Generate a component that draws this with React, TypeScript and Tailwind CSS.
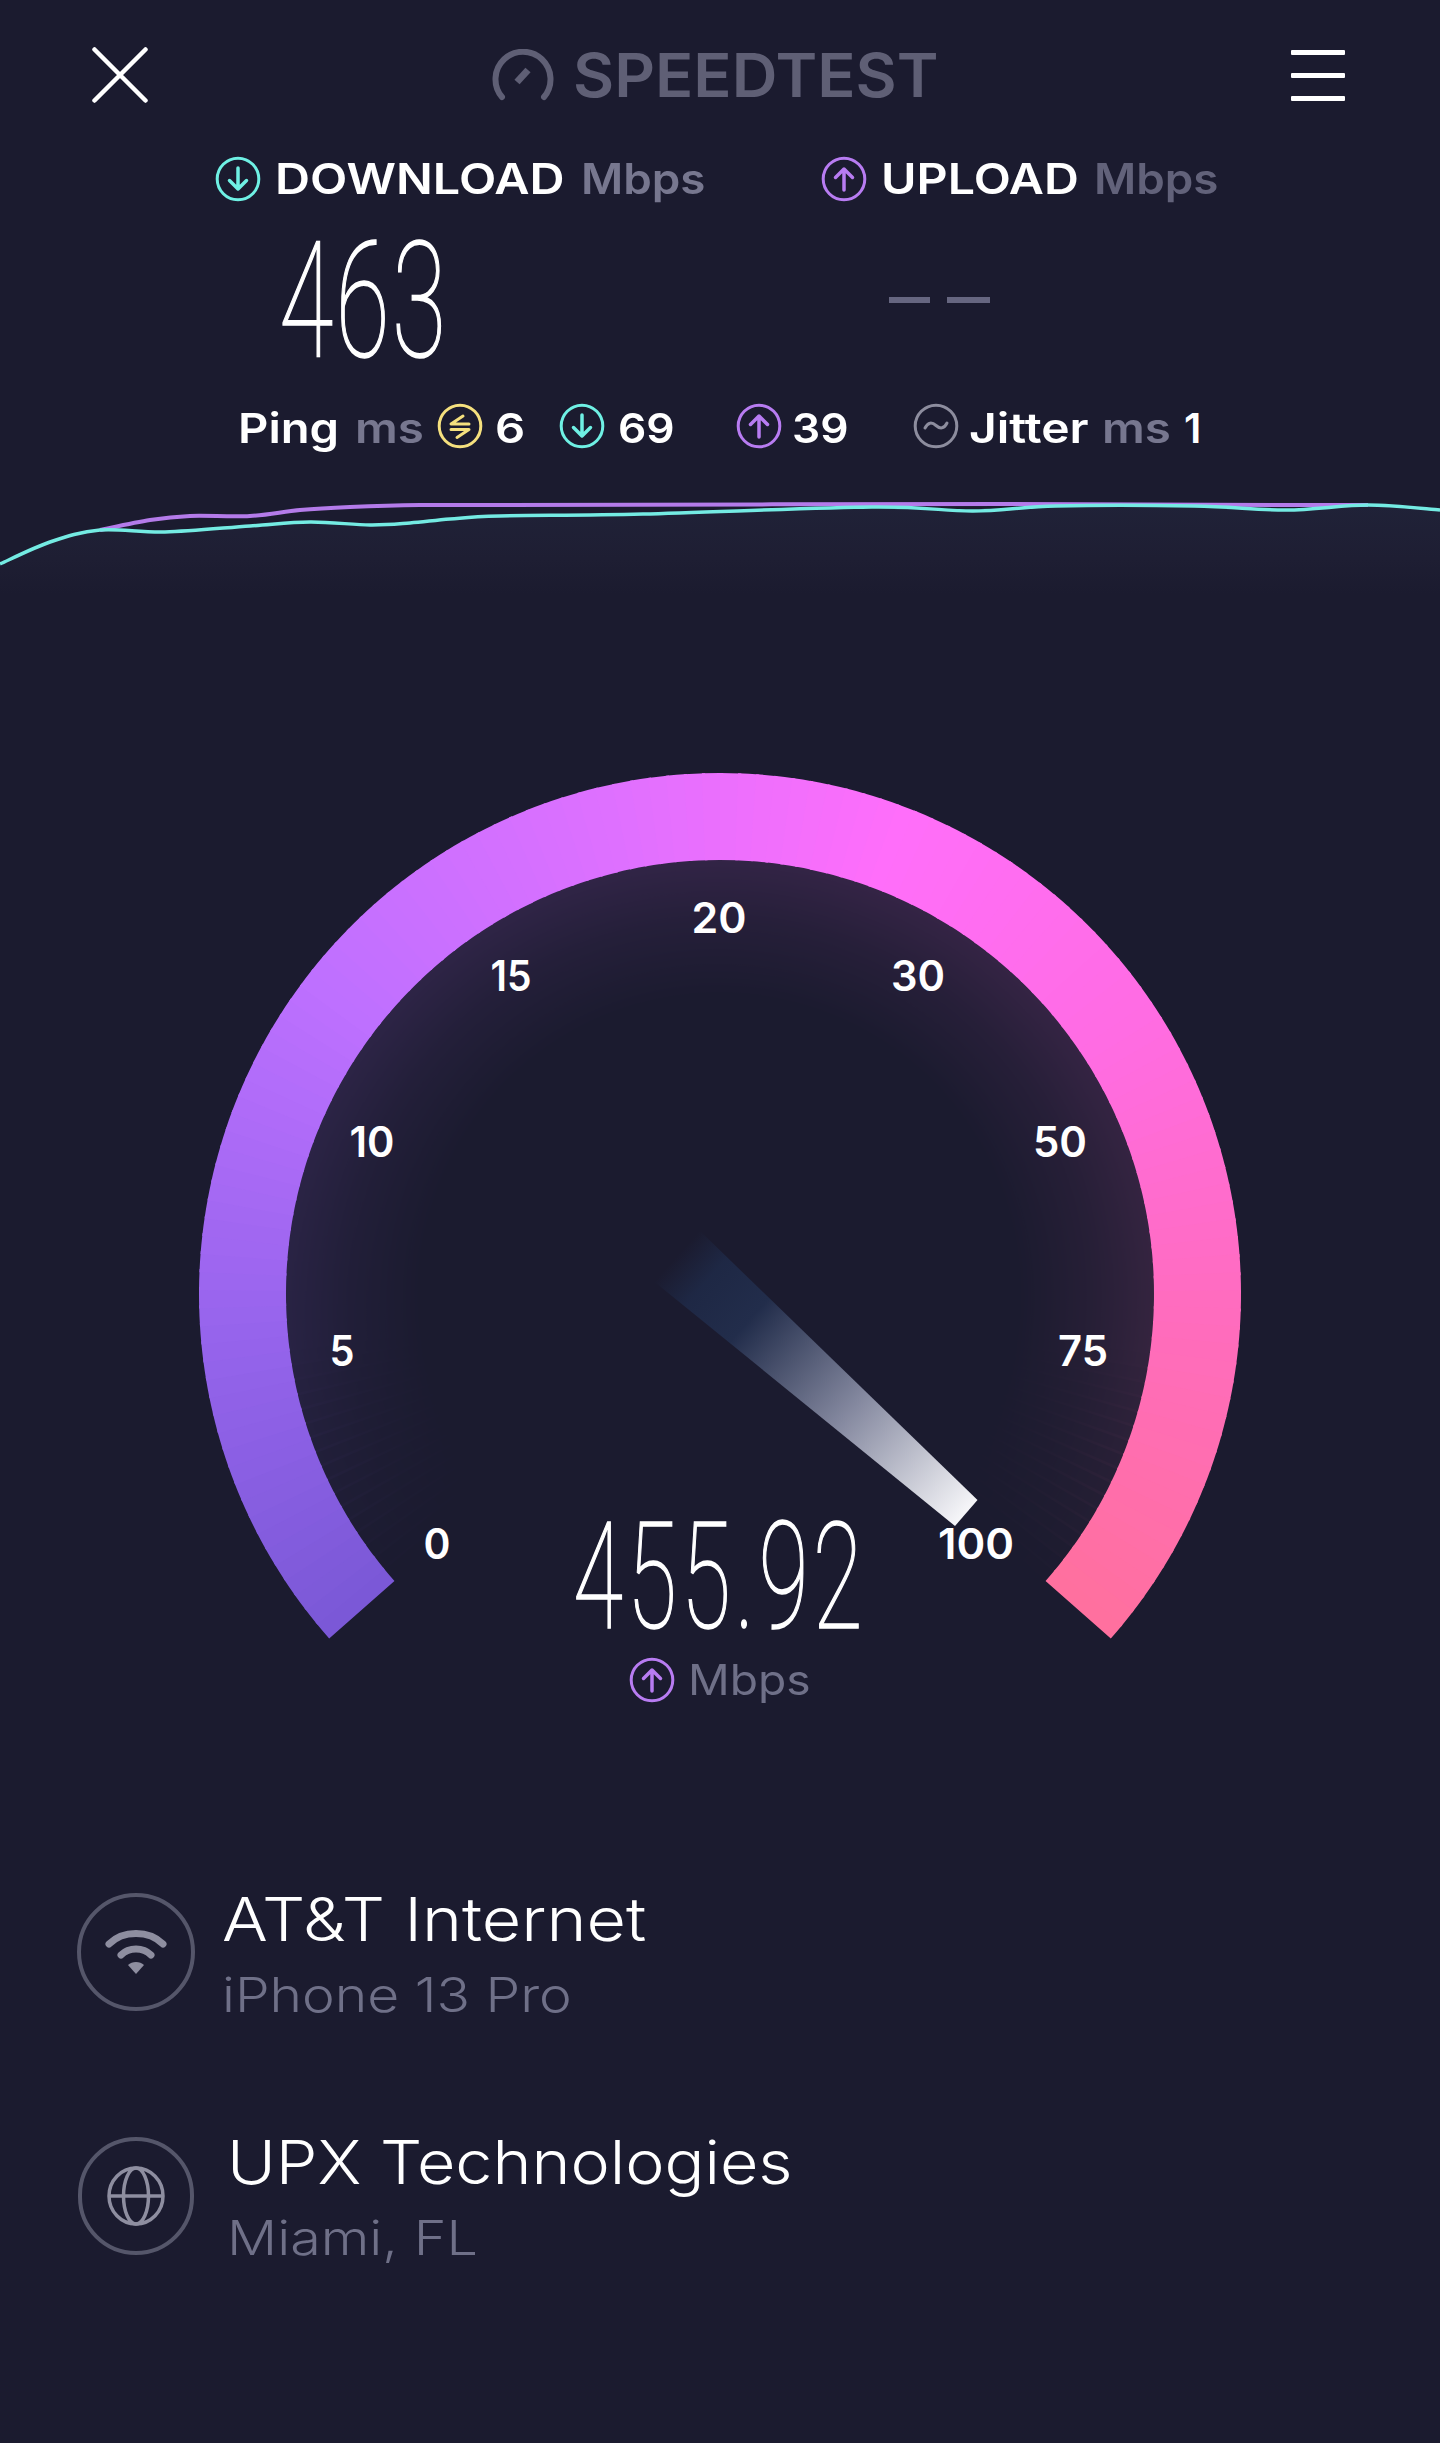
const CX = 720;
const CY = 534;

function polar(r: number, deg: number) {
  const a = (deg * Math.PI) / 180;
  return [CX + r * Math.cos(a), CY + r * Math.sin(a)];
}

const STOPS: [number, number[]][] = [
  [0, [122, 88, 214]],
  [0.14, [150, 100, 236]],
  [0.3, [190, 112, 255]],
  [0.45, [222, 112, 255]],
  [0.58, [255, 110, 250]],
  [0.72, [255, 108, 226]],
  [0.85, [255, 108, 190]],
  [1, [255, 112, 158]],
];

function mix(t: number) {
  for (let i = 1; i < STOPS.length; i++) {
    if (t <= STOPS[i][0]) {
      const [a, ca] = STOPS[i - 1];
      const [b, cb] = STOPS[i];
      const k = (t - a) / (b - a);
      const c = ca.map((v, j) => Math.round(v + (cb[j] - v) * k));
      return `rgb(${c[0]},${c[1]},${c[2]})`;
    }
  }
  return "rgb(255,112,158)";
}

const START = 138.6;
const SWEEP = 262.8;
const N = 132;

function sector(r0: number, r1: number, a0: number, a1: number) {
  const [x0, y0] = polar(r1, a0);
  const [x1, y1] = polar(r1, a1);
  const [x2, y2] = polar(r0, a1);
  const [x3, y3] = polar(r0, a0);
  return `M${x0} ${y0}A${r1} ${r1} 0 0 1 ${x1} ${y1}L${x2} ${y2}A${r0} ${r0} 0 0 0 ${x3} ${y3}Z`;
}

const segments = Array.from({ length: N }, (_, i) => {
  const t = (i + 0.5) / N;
  const a0 = START + (SWEEP * i) / N;
  const a1 = START + (SWEEP * (i + 1)) / N + (i < N - 1 ? 0.35 : 0);
  const edge = Math.min(t, 1 - t) / 0.13;
  return { a0, a1, color: mix(t), glow: Math.min(1, Math.max(0.05, edge)) };
});

const TICKS: [string, number, number, number][] = [
  ["0", 437, 783, 27],
  ["5", 342, 590, 25],
  ["10", 372, 381, 45],
  ["15", 511, 215, 41],
  ["20", 719, 157, 55],
  ["30", 918, 215, 54],
  ["50", 1060, 381, 54],
  ["75", 1083, 590, 50],
  ["100", 976, 783, 76],
];

function smooth(pts: number[][]) {
  let d = `M${pts[0][0]} ${pts[0][1]}`;
  for (let i = 0; i < pts.length - 1; i++) {
    const p0 = pts[Math.max(0, i - 1)];
    const p1 = pts[i];
    const p2 = pts[i + 1];
    const p3 = pts[Math.min(pts.length - 1, i + 2)];
    d += `C${p1[0] + (p2[0] - p0[0]) / 6} ${p1[1] + (p2[1] - p0[1]) / 6} ${p2[0] - (p3[0] - p1[0]) / 6} ${p2[1] - (p3[1] - p1[1]) / 6} ${p2[0]} ${p2[1]}`;
  }
  return d;
}

const CYAN_PTS = [
  [0, 84], [50, 62], [100, 50], [165, 52], [250, 46], [310, 42], [370, 45], [410, 43], [450, 39], [500, 36],
  [643, 34], [872, 27], [973, 31], [1056, 26], [1194, 26], [1286, 30], [1368, 25], [1440, 30],
];
const PURPLE_PTS = [
  [100, 50], [150, 40], [190, 36], [250, 36], [300, 30], [350, 27], [420, 25], [500, 25], [1010, 24], [1286, 25], [1368, 25],
];

function Ring({ color, children }: { color: string; children: React.ReactNode }) {
  return (
    <svg viewBox="0 0 46 46" className="h-[46px] w-[46px] shrink-0" fill="none" stroke={color} strokeLinecap="round" strokeLinejoin="round">
      <circle cx="23" cy="23" r="20.8" strokeWidth="3" />
      {children}
    </svg>
  );
}

function DownIcon() {
  return (
    <Ring color="#6ff0e4">
      <path d="M23 12v21M14.500 24.500 23 33l8.500-8.500" strokeWidth="3.500" />
    </Ring>
  );
}

function UpIcon() {
  return (
    <Ring color="#b87cf2">
      <path d="M23 34V13M14.500 21.500 23 13l8.500 8.500" strokeWidth="3.500" />
    </Ring>
  );
}

const SANS = "font-['Inter','Liberation_Sans',sans-serif]";
const THIN = "font-['Roboto','Liberation_Sans',sans-serif]";

export default function App() {
  return (
    <div className={`h-[2443px] w-[1440px] overflow-hidden bg-[#1b1b2f] ${SANS}`}>
      <header className="flex items-center pt-[47px]">
        <svg viewBox="0 0 56 56" className="ml-[92px] h-[56px] w-[56px]" fill="none" stroke="#fff" strokeWidth="4.500" strokeLinecap="round">
          <path d="M2.500 2.500 53.500 53.500M53.500 2.500 2.500 53.500" />
        </svg>
        <div className="ml-[344px] flex items-center">
          <svg viewBox="0 0 62 52" className="h-[52px] w-[62px]" fill="none" stroke="#5f5f75" strokeWidth="6" strokeLinecap="round">
            <path d="M10 48A27.500 27.500 0 1 1 52 48" />
            <path d="M25 33 36 21" strokeWidth="7" strokeLinecap="butt" />
          </svg>
          <span className="ml-[19px] w-[360px] origin-left scale-x-[1.055] text-[60px] leading-[52px] font-semibold whitespace-nowrap text-[#5f5f75]">SPEEDTEST</span>
        </div>
        <div className="mr-[95px] ml-auto flex w-[54px] flex-col gap-[18px]">
          <div className="h-[5px] rounded-[1px] bg-white" />
          <div className="h-[5px] rounded-[1px] bg-white" />
          <div className="h-[5px] rounded-[1px] bg-white" />
        </div>
      </header>

      <section className="mt-[53px] flex pl-[215px] text-[42px] leading-[46px] font-semibold whitespace-nowrap">
        <div className="flex w-[606px] items-center">
          <DownIcon />
          <span className="ml-[14px] w-[288px] origin-left scale-x-[1.155] text-white">DOWNLOAD</span>
          <span className="ml-[18px] w-[123px] origin-left scale-x-[1.09] text-[#77778f]">Mbps</span>
        </div>
        <div className="flex items-center">
          <UpIcon />
          <span className="ml-[14px] w-[195px] origin-left scale-x-[1.15] text-white">UPLOAD</span>
          <span className="ml-[18px] w-[122px] origin-left scale-x-[1.09] text-[#62627a]">Mbps</span>
        </div>
      </section>

      <section className="mt-[40px] flex h-[115px] items-center pl-[279px]">
        <div className={`w-[610px] pt-[4px] text-[162px] leading-[115px] font-thin text-white ${THIN}`}>
          <span className="inline-block origin-left scale-x-[0.61] tracking-[4px] [-webkit-text-stroke:1.6px_white]">463</span>
        </div>
        <div className="flex gap-[17px]">
          <div className="h-[6px] w-[41px] bg-[#666680]" />
          <div className="h-[6px] w-[43px] bg-[#666680]" />
        </div>
      </section>

      <section className="mt-[46px] flex h-[46px] items-center pl-[238px] text-[41px] leading-[50px] font-semibold whitespace-nowrap text-white">
        <span className="mt-[4px] w-[102px] origin-left scale-x-[1.15]">Ping</span>
        <span className="mt-[4px] ml-[15px] w-[68px] origin-left scale-x-[1.16] text-[#77778f]">ms</span>
        <div className="ml-[14px]">
          <Ring color="#f5e07e">
            <path d="M26 13 14 21H32M14 26.500H32L20 34.500" strokeWidth="3" />
          </Ring>
        </div>
        <span className="mt-[4px] ml-[12px] w-[27px] origin-left scale-x-[1.15]">6</span>
        <div className="ml-[37px]"><DownIcon /></div>
        <span className="mt-[4px] ml-[13px] w-[54px] origin-left scale-x-[1.08]">69</span>
        <div className="ml-[64px]"><UpIcon /></div>
        <span className="mt-[4px] ml-[10px] w-[55px] origin-left scale-x-[1.08]">39</span>
        <div className="ml-[66px]">
          <Ring color="#8d8d9e">
            <path d="M12 25c3-6 7-6 11-2.500s8 3.500 11-2.500" strokeWidth="3" />
          </Ring>
        </div>
        <span className="mt-[4px] ml-[10px] w-[117px] origin-left scale-x-[1.17]">Jitter</span>
        <span className="mt-[4px] ml-[16px] w-[67px] origin-left scale-x-[1.16] text-[#77778f]">ms</span>
        <span className="mt-[4px] ml-[15px]">1</span>
      </section>

      <svg viewBox="0 0 1440 130" className="mt-[31px] block h-[130px] w-[1440px]" fill="none">
        <defs>
          <linearGradient id="graphFill" x1="0" y1="0" x2="0" y2="1">
            <stop offset="0" stopColor="#202238" />
            <stop offset="0.6" stopColor="#1e1e33" />
            <stop offset="1" stopColor="#1b1b2f" />
          </linearGradient>
        </defs>
        <path d={`${smooth(CYAN_PTS)}L1440 115L0 115Z`} fill="url(#graphFill)" />
        <path d={smooth(PURPLE_PTS)} stroke="#b47bea" strokeWidth="4" />
        <path d={smooth(CYAN_PTS)} stroke="#74ebe3" strokeWidth="3.500" />
      </svg>

      <div className="relative mt-[150px] h-[880px] w-[1440px]">
        <svg viewBox="0 0 1440 880" className="block h-[880px] w-[1440px]" fill="none">
          <defs>
            <radialGradient id="glowFade" gradientUnits="userSpaceOnUse" cx={CX} cy={CY} r="434">
              <stop offset="0.68" stopColor="#000" />
              <stop offset="0.86" stopColor="#777" />
              <stop offset="1" stopColor="#fff" />
            </radialGradient>
            <mask id="glowMask" maskUnits="userSpaceOnUse" x="0" y="0" width="1440" height="880">
              <rect width="1440" height="880" fill="url(#glowFade)" />
            </mask>
            <linearGradient id="needle" gradientUnits="userSpaceOnUse" x1="677" y1="496" x2="966" y2="753">
              <stop offset="0" stopColor="#1f2b4a" stopOpacity="0" />
              <stop offset="0.1" stopColor="#1f2b4a" stopOpacity="0.8" />
              <stop offset="0.25" stopColor="#222d4b" />
              <stop offset="0.6" stopColor="#84889f" />
              <stop offset="1" stopColor="#f6f6f9" />
            </linearGradient>
          </defs>
          <g mask="url(#glowMask)" opacity="0.11">
            {segments.map((s, i) => (
              <path key={i} d={sector(270, 436, s.a0, s.a1)} fill={s.color} fillOpacity={s.glow} />
            ))}
          </g>
          {segments.map((s, i) => (
            <path key={i} d={sector(434, 521, s.a0, s.a1)} fill={s.color} />
          ))}
          <path d="M700 471 977.500 740 955 766 654 521.500Z" fill="url(#needle)" />
          {TICKS.map(([label, x, y, w]) => (
            <text key={label} x={x} y={y} textAnchor="middle" dominantBaseline="central" textLength={w} lengthAdjust="spacingAndGlyphs" fill="#fff" className="text-[42px] font-semibold">
              {label}
            </text>
          ))}
        </svg>
        <div className={`absolute top-[760px] left-[573px] text-[149px] leading-[115px] font-thin whitespace-nowrap text-white ${THIN}`}>
          <span className="inline-block origin-left scale-x-[0.61] tracking-[7px] [-webkit-text-stroke:1.6px_white]">455.92</span>
        </div>
        <div className="absolute top-[897px] left-[629px] flex items-center">
          <UpIcon />
          <span className="ml-[13px] w-[121px] origin-left scale-x-[1.1] text-[42px] leading-[46px] font-normal text-[#6f7088]">Mbps</span>
        </div>
      </div>

      <section className="mt-[253px] flex h-[118px] items-start pl-[77px] whitespace-nowrap">
        <div className="flex h-[118px] w-[118px] items-center justify-center rounded-full border-[4px] border-[#55566a]">
          <svg viewBox="0 0 62 44" className="h-[44px] w-[62px]" fill="none" stroke="#8e8ea0" strokeLinecap="round">
            <path d="M4 14C18 0 44 0 58 14" strokeWidth="7" />
            <path d="M16 25C24 17 38 17 46 25" strokeWidth="7" />
            <path d="M23 35c4-4 12-4 16 0l-8 9Z" fill="#8e8ea0" stroke="none" />
          </svg>
        </div>
        <div className="-mt-[4px] ml-[27px]">
          <div className="origin-left scale-x-[1.135] text-[60px] leading-[60px] font-light text-white">AT&amp;T Internet</div>
          <div className="mt-[16px] origin-left scale-x-[1.15] text-[48px] leading-[60px] font-light text-[#6f7088]">iPhone 13 Pro</div>
        </div>
      </section>

      <section className="mt-[126px] flex h-[118px] items-start pl-[78px] whitespace-nowrap">
        <div className="flex h-[118px] w-[116px] items-center justify-center rounded-full border-[4px] border-[#55566a]">
          <svg viewBox="0 0 58 60" className="h-[60px] w-[58px]" fill="none" stroke="#8e8ea0" strokeWidth="3.500">
            <ellipse cx="29" cy="30" rx="27" ry="28" />
            <ellipse cx="29" cy="30" rx="12.500" ry="28" />
            <path d="M2 30h54" />
          </svg>
        </div>
        <div className="-mt-[5px] ml-[33px]">
          <div className="origin-left scale-x-[1.105] text-[60px] leading-[60px] font-light text-white">UPX Technologies</div>
          <div className="mt-[16px] origin-left scale-x-[1.16] text-[48px] leading-[60px] font-light text-[#6f7088]">Miami, FL</div>
        </div>
      </section>
    </div>
  );
}
